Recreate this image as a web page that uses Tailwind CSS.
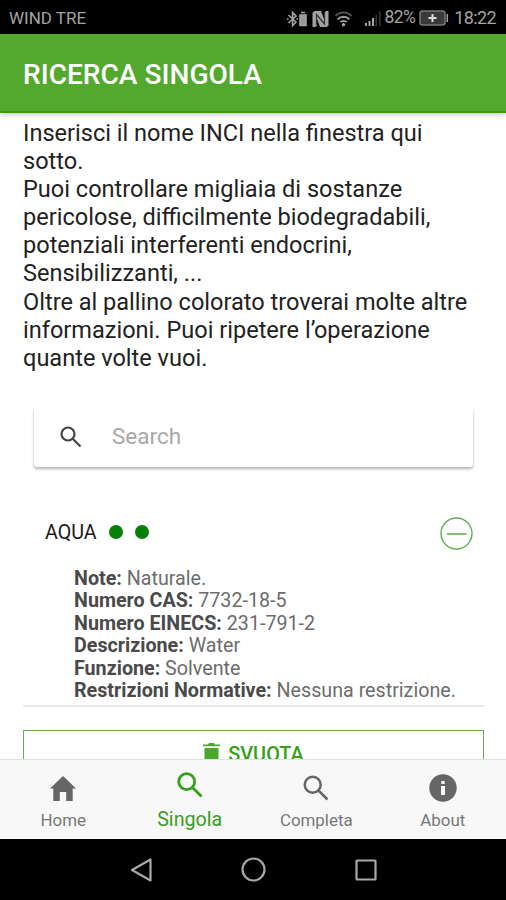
<!DOCTYPE html>
<html lang="it">
<head>
    <meta charset="UTF-8">
    <meta name="viewport" content="width=device-width, initial-scale=1.0">
    <title>Ricerca singola</title>
    <script src="https://cdn.jsdelivr.net/npm/@tailwindcss/browser@4"></script>
</head>
<body class="bg-white font-['Roboto',sans-serif]">

<div class="flex flex-col w-[506px] h-[900px] overflow-hidden">

    <!-- Status bar -->
    <div class="flex items-center shrink-0 h-[34px] bg-black text-[#a3a3a3] pl-[9px] pr-[10px] pt-[3px]">
        <span class="text-[17px]">WIND TRE</span>
        <div class="flex items-center ml-auto">
            <!-- Bluetooth with battery -->
            <svg class="w-[22px] h-[18px] mr-[4px]" viewBox="0 0 22 18" fill="none" stroke="#a3a3a3" stroke-width="1.6">
                <path d="M2.5 5l7.5 7-3.4 3.6V2.4L10 6l-7.5 7"/>
                <path d="M1 9h1.5M10.5 9H12"/>
                <path d="M14 5h6v10.5h-6z" fill="#999"/>
                <path d="M15 2.5h4"/>
            </svg>
            <!-- NFC -->
            <svg class="w-[17px] h-[18px] mr-[6px]" viewBox="0 0 17 18">
                <path d="M2.5 1H9l3 8V3.500L14 1h2.500v14.500L14.500 17H8L5 9v6.500L3 17H.5V3z" fill="#a3a3a3"/>
                <path d="M4.500 15V4.500l8 9.500V3" fill="none" stroke="#333" stroke-width="1.200"/>
            </svg>
            <!-- Wifi -->
            <svg class="w-[17px] h-[16px] mr-[13px]" viewBox="0 0 17 16" fill="none" stroke="#a3a3a3" stroke-width="1.9">
                <path d="M.5 5a11 11 0 0 1 16 0" stroke="#555"/>
                <path d="M2.5 8.3a8.5 8.5 0 0 1 12 0M5.3 11.2a4.5 4.5 0 0 1 6.4 0"/>
                <circle cx="8.5" cy="13.7" r="1.7" fill="#a3a3a3" stroke="none"/>
            </svg>
            <!-- Signal -->
            <svg class="w-[16px] h-[18px] mr-[3px]" viewBox="0 0 16 18">
                <path d="M0 13h2v3H0zM3.5 11h2v5h-2zM7 8h2v8H7z" fill="#a3a3a3"/>
                <path d="M10.5 5H12v11h-1.5zM14 1.5h1.500V16H14z" fill="#383838"/>
            </svg>
            <span class="text-[17.5px] leading-[20px] tracking-[-0.6px] mt-[-3px]">82%</span>
            <!-- Battery -->
            <svg class="w-[30px] h-[18px] ml-[4px] mr-[5px] mt-[-2px]" viewBox="0 0 30 18">
                <rect x="1" y="2" width="25" height="14" rx="2.5" fill="#3a3a3a" stroke="#777" stroke-width="1.5"/>
                <path d="M28.3 5v8" stroke="#a3a3a3" stroke-width="1.5"/>
                <path d="M9.5 9h8M13.5 5v8" stroke="#ddd" stroke-width="2"/>
            </svg>
            <span class="text-[18px] leading-[20px] tracking-[-0.6px] mt-[-1px]">18:22</span>
        </div>
    </div>

    <!-- Title bar -->
    <div class="relative z-10 flex items-center shrink-0 h-[79px] bg-[#53a92e] border-b-2 border-[#379a10] pl-[23px] pt-[5px] shadow-[0_2px_5px_rgba(0,0,0,0.2)]">
        <h1 class="text-white text-[28.1px] font-medium">RICERCA SINGOLA</h1>
    </div>

    <!-- Content -->
    <div class="flex flex-col flex-1 min-h-0 overflow-hidden pt-[6px] pl-[23px] pr-[22px]">
        <p class="text-[23.55px] leading-[28.1px] text-[#222] whitespace-nowrap">
            Inserisci il nome INCI nella finestra qui<br>
            sotto.<br>
            Puoi controllare migliaia di sostanze<br>
            pericolose, difficilmente biodegradabili,<br>
            potenziali interferenti endocrini,<br>
            Sensibilizzanti, ...<br>
            Oltre al pallino colorato troverai molte altre<br>
            informazioni. Puoi ripetere l’operazione<br>
            quante volte vuoi.
        </p>

        <!-- Search field -->
        <div class="flex items-center shrink-0 h-[60px] mt-[35px] mx-[11px] rounded-[3px] shadow-[0_2px_3px_rgba(0,0,0,0.3)]">
            <svg class="w-[22px] h-[22px] ml-[26px] mr-[30px]" viewBox="0 0 22 22" fill="none" stroke="#444" stroke-width="2.2">
                <circle cx="8" cy="8" r="6.5"/>
                <path d="M13 13l7.5 7.5"/>
            </svg>
            <span class="text-[22.5px] text-[#a8a8a8]">Search</span>
        </div>

        <!-- Result -->
        <div class="flex items-center shrink-0 h-[34px] mt-[50px] pl-[22px] pr-[11px]">
            <span class="text-[19.7px] text-[#1a1a1a] mt-[-3px]">AQUA</span>
            <span class="w-[14px] h-[14px] ml-[12px] mt-[-4px] rounded-full bg-[#078007]"></span>
            <span class="w-[14px] h-[14px] ml-[12px] mt-[-4px] rounded-full bg-[#078007]"></span>
            <svg class="w-[33px] h-[33px] ml-auto" viewBox="0 0 33 33" fill="none" stroke="#64ad50" stroke-width="1.4">
                <circle cx="16.5" cy="16.5" r="15.5"/>
                <path d="M7 17h19.5" stroke-width="1.6"/>
            </svg>
        </div>
        <div class="shrink-0 mt-[17px] pl-[51px] pb-[2px] border-b-2 border-[#e8e8e8] text-[19.7px] leading-[22.5px] text-[#6c6c6c] whitespace-nowrap">
            <p><b class="font-bold text-[#4a4a4a]">Note:</b> Naturale.</p>
            <p><b class="font-bold text-[#4a4a4a]">Numero CAS:</b> 7732-18-5</p>
            <p><b class="font-bold text-[#4a4a4a]">Numero EINECS:</b> 231-791-2</p>
            <p><b class="font-bold text-[#4a4a4a]">Descrizione:</b> Water</p>
            <p><b class="font-bold text-[#4a4a4a]">Funzione:</b> Solvente</p>
            <p><b class="font-bold text-[#4a4a4a]">Restrizioni Normative:</b> Nessuna restrizione.</p>
        </div>

        <!-- Clear button, its lower part scrolls under the tabs -->
        <button class="flex items-start justify-center shrink-0 h-[51px] mt-[23px] pt-[12px] border border-[#64ad50] text-[#379f1c]">
            <svg class="w-[17px] h-[20px] mr-[8px]" viewBox="0 0 17 20" fill="#4da72b">
                <path d="M0 1.5h5L6 0h5l1 1.5h5v1.7H0zM1.5 5h14v13a2 2 0 0 1-2 2h-10a2 2 0 0 1-2-2z"/>
            </svg>
            <span class="text-[19.9px] leading-[24px] font-medium">SVUOTA</span>
        </button>
    </div>

    <!-- Tabs -->
    <div class="relative z-10 grid grid-cols-4 shrink-0 h-[80px] bg-[#f8f8f8] border-t border-[#e0e0e0] text-[16.9px] leading-[20px] text-[#777]">
        <div class="flex flex-col items-center pt-[16px]">
            <svg class="w-[26px] h-[26px]" viewBox="0 0 26 26" fill="#666">
                <path d="M13 0l13 12.5h-3.3V25h-6.500v-9H9.800v9H3.300V12.500H0z"/>
            </svg>
            <span class="mt-[8px]">Home</span>
        </div>
        <div class="flex flex-col items-center pt-[12px] text-[#379f1c]">
            <svg class="w-[26px] h-[26px]" viewBox="0 0 26 26" fill="none" stroke="#379f1c" stroke-width="2.8">
                <circle cx="9.7" cy="9.7" r="8"/>
                <path d="M15.5 15.5l9 9"/>
            </svg>
            <span class="mt-[12px] text-[19.7px]">Singola</span>
        </div>
        <div class="flex flex-col items-center pt-[15px]">
            <svg class="w-[26px] h-[26px]" viewBox="0 0 26 26" fill="none" stroke="#666" stroke-width="2.5">
                <circle cx="9.7" cy="9.7" r="8"/>
                <path d="M15.5 15.5l9 9"/>
            </svg>
            <span class="mt-[9px]">Completa</span>
        </div>
        <div class="flex flex-col items-center pt-[14px]">
            <svg class="w-[28px] h-[28px]" viewBox="0 0 28 28">
                <circle cx="14" cy="14" r="13.7" fill="#666"/>
                <path d="M12.3 7h3.4v3h-3.4zM12 12h4v9h-4z" fill="#f8f8f8"/>
            </svg>
            <span class="mt-[8px]">About</span>
        </div>
    </div>

    <!-- Android navigation -->
    <div class="flex items-center shrink-0 h-[61px] bg-black pl-[130px]">
        <svg class="w-[22px] h-[24px]" viewBox="0 0 22 24" fill="none" stroke="#a8a8a8" stroke-width="2.2" stroke-linejoin="round">
            <path d="M2 12L20.5 1.5v21z"/>
        </svg>
        <svg class="w-[25px] h-[25px] ml-[89px]" viewBox="0 0 25 25" fill="none" stroke="#a8a8a8" stroke-width="2.2">
            <circle cx="12.5" cy="12.5" r="11"/>
        </svg>
        <svg class="w-[22px] h-[22px] ml-[89px]" viewBox="0 0 22 22" fill="none" stroke="#a8a8a8" stroke-width="2.2">
            <rect x="1.5" y="1.5" width="19" height="19" rx="0.5"/>
        </svg>
    </div>

</div>

</body>
</html>
